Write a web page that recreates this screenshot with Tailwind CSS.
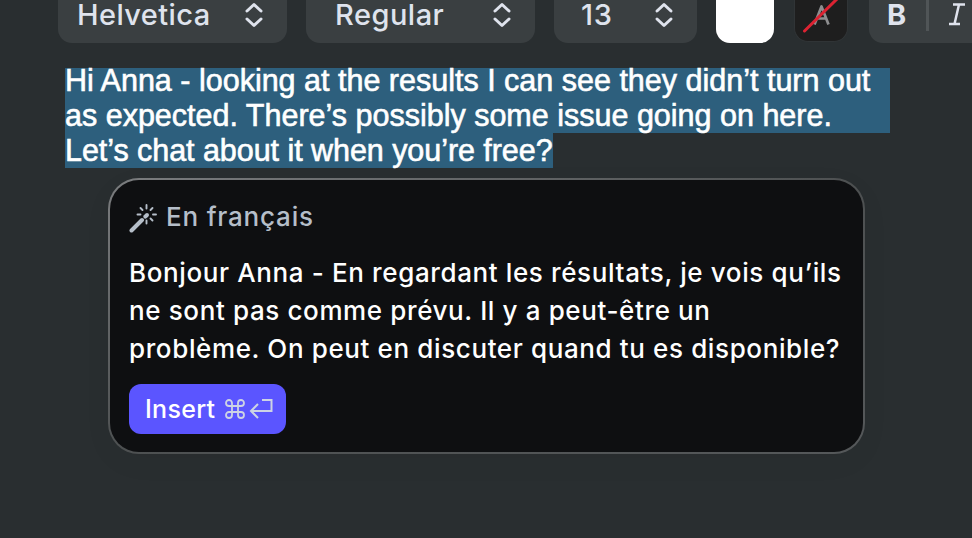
<!DOCTYPE html>
<html lang="en">
<head>
<meta charset="utf-8">
<title>Translate</title>
<script src="https://cdn.jsdelivr.net/npm/@tailwindcss/browser@4"></script>
</head>
<body class="w-[972px] h-[538px] overflow-hidden bg-[#292e30] font-['Inter',sans-serif]">
<header class="flex h-[43px] pl-[58px] w-[972px] text-[#dfe3ed] text-[29px] leading-[30px] font-medium whitespace-nowrap">
  <div class="shrink-0 w-[229px] h-[43px] bg-[#3a3f41] rounded-b-[14px] flex justify-between pl-[19px] pr-[23px]">
    <span class="tracking-[0.4px]">Helvetica</span>
    <svg class="w-[20px] h-[30px]" viewBox="0 0 20 30" fill="none" stroke="currentColor" stroke-width="3" stroke-linecap="round" stroke-linejoin="round"><path d="M3 11L10 4.500L17 11M3 19L10 25.500L17 19"/></svg>
  </div>
  <div class="shrink-0 ml-[19px] w-[229px] h-[43px] bg-[#3a3f41] rounded-b-[14px] flex justify-between pl-[29px] pr-[23px]">
    <span class="tracking-[0.5px]">Regular</span>
    <svg class="w-[20px] h-[30px]" viewBox="0 0 20 30" fill="none" stroke="currentColor" stroke-width="3" stroke-linecap="round" stroke-linejoin="round"><path d="M3 11L10 4.500L17 11M3 19L10 25.500L17 19"/></svg>
  </div>
  <div class="shrink-0 ml-[19px] w-[143px] h-[43px] bg-[#3a3f41] rounded-b-[14px] flex justify-between pl-[27px] pr-[23px]">
    <span class="tracking-[0.8px]">13</span>
    <svg class="w-[20px] h-[30px]" viewBox="0 0 20 30" fill="none" stroke="currentColor" stroke-width="3" stroke-linecap="round" stroke-linejoin="round"><path d="M3 11L10 4.500L17 11M3 19L10 25.500L17 19"/></svg>
  </div>
  <div class="shrink-0 ml-[19px] w-[58px] h-[43px] bg-white rounded-b-[14px]"></div>
  <div class="shrink-0 ml-[20px] w-[54px] h-[42px] bg-[#1e1e1e] border border-t-0 border-[#303436] rounded-b-[14px]">
    <svg class="w-[52px] h-[40px]" viewBox="0 0 52 40" fill="none" stroke-linecap="round"><path d="M19.500 24.500L26.500 6.500L33.500 24.500M22.500 18.500H31" stroke="#8e8e90" stroke-width="2.700" stroke-linecap="butt" stroke-linejoin="round"/><path d="M9.500 31L44 -3" stroke="#dc2332" stroke-width="3"/></svg>
  </div>
  <div class="ml-[21px] flex-1 min-w-0 h-[43px] bg-[#3a3f41] rounded-bl-[14px] flex pl-[18px]">
    <span class="shrink-0 w-[39px] text-[29px] leading-[29px] font-bold">B</span>
    <span class="shrink-0 w-[3px] h-[31px] bg-[#505557]"></span>
    <svg class="shrink-0 ml-[19px] w-[18px] h-[30px]" viewBox="0 0 18 30" fill="none" stroke="currentColor" stroke-width="2.500"><path d="M5 4.500H17M1 24H12M11 4.500L6.500 24"/></svg>
  </div>
</header>
<main>
  <div class="mt-[25px] ml-[65px] w-[825px] font-['Liberation_Sans',sans-serif] text-[30.500px] text-white whitespace-nowrap [-webkit-text-stroke:0.6px_white]">
    <p class="h-[30px] bg-[#2d5f7d] leading-[25px]">Hi Anna - looking at the results I can see they didn’t turn out</p>
    <p class="h-[35px] bg-[#2d5f7d] leading-[35px]">as expected. There’s possibly some issue going on here.</p>
    <p class="h-[35px] w-[488px] bg-[#2d5f7d] leading-[35px] tracking-[-0.05px]">Let’s chat about it when you’re free?</p>
  </div>
  <section class="mt-[10px] ml-[108px] w-[757px] h-[276px] rounded-[31px] p-[2px] bg-linear-to-br from-[#7b7d7f] via-[#4d5051] to-[#55585a] shadow-[0_8px_30px_rgba(0,0,0,0.04)]">
    <div class="h-full rounded-[29px] bg-[#0e0f11] pl-[19px] pt-[20px] whitespace-nowrap">
      <div class="h-[36px] flex items-center text-[#b5bec9] text-[26px] leading-[36px] font-medium">
        <svg class="w-[28px] h-[30px]" viewBox="0 0 28 30" fill="none" stroke="currentColor" stroke-linecap="round"><path d="M2.500 27.500L13 17" stroke-width="4"/><path d="M16.300 13.700L18 12" stroke-width="4"/><path d="M17.500 2V5.500M17.500 17.500V20.500M8.500 11.500H11.500M24 11.500H27M11.500 5L13.500 7M23.500 5L21.500 7M21.500 15.500L23.500 17.500" stroke-width="1.900"/></svg>
        <span class="ml-[9px] pb-[2px] tracking-[0.8px]">En français</span>
      </div>
      <div class="mt-[17px] pt-[1px] text-white text-[26px] leading-[38px] font-[450] tracking-[0.62px]">
        <p>Bonjour Anna - En regardant les résultats, je vois qu’ils</p>
        <p>ne sont pas comme prévu. Il y a peut-être un</p>
        <p>problème. On peut en discuter quand tu es disponible?</p>
      </div>
      <button class="mt-[16px] w-[157px] h-[50px] rounded-[12px] bg-[#5b55ff] text-white text-[25px] flex items-center pl-[16px]">
        <span class="w-[80px] pt-[2px] text-left font-[450] tracking-[0.3px]">Insert</span>
        <svg class="w-[20px] h-[20px]" viewBox="0 0 20 20" fill="none" stroke="#cdd3e4" stroke-width="1.800"><path d="M7 7V4A3 3 0 1 0 4 7H16A3 3 0 1 0 13 4V16A3 3 0 1 0 16 13H4A3 3 0 1 0 7 16Z"/></svg>
        <svg class="ml-[4px] w-[25px] h-[22px]" viewBox="0 0 25 22" fill="none" stroke="#cdd3e4" stroke-width="2"><path d="M13 2H22.500V13H3M9 6L2 13L9 20"/></svg>
      </button>
    </div>
  </section>
</main>
</body>
</html>
